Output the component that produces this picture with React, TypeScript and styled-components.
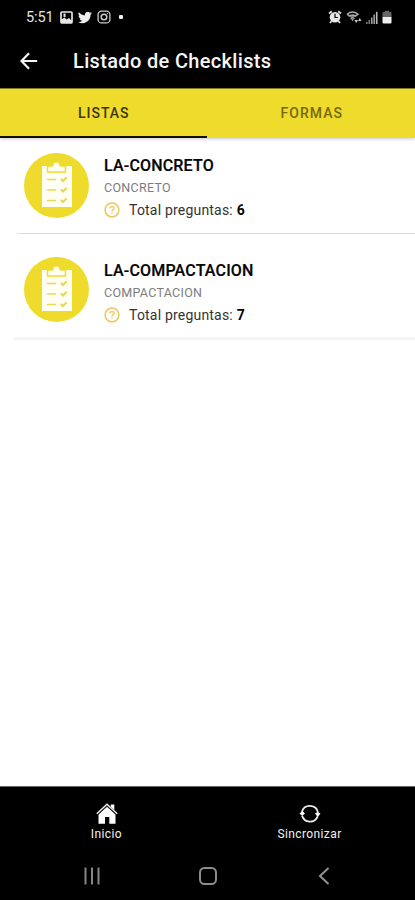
import React from "react";
import styled, { createGlobalStyle } from "styled-components";

const GlobalStyle = createGlobalStyle`
  * { box-sizing: border-box; }
  body { margin: 0; background: #fff; font-family: Roboto, "Liberation Sans", sans-serif; }
  svg { display: block; flex: none; }
`;

const Screen = styled.div`
  width: 100%;
  height: 900px;
  display: flex;
  flex-direction: column;
  background: #fff;
  overflow: hidden;
`;

const StatusBar = styled.div`
  height: 34px;
  padding: 0 23px 0 26px;
  display: flex;
  align-items: center;
  justify-content: space-between;
  background: #000;
  color: #e6e6e6;
`;

const StatusGroup = styled.div<{ $gap: number }>`
  display: flex;
  align-items: center;
  gap: ${(p) => p.$gap}px;
`;

const Clock = styled.span`
  width: 29px;
  padding-top: 1px;
  font-size: 14.5px;
  line-height: 18px;
  letter-spacing: -0.1px;
`;

const NoticeDot = styled.span`
  width: 4px;
  height: 4px;
  margin: 0 0 1px 3px;
  border-radius: 1px;
  background: #eee;
`;

const AppBar = styled.header`
  height: 54px;
  padding: 0 0 0 20px;
  display: flex;
  align-items: center;
  gap: 35px;
  background: #000;
  color: #f5f5f5;
`;

const AppTitle = styled.h1`
  margin: 0;
  font-size: 20px;
  line-height: 26px;
  font-weight: 500;
  letter-spacing: 0.34px;
  white-space: nowrap;
`;

const Tabs = styled.nav`
  height: 50px;
  display: flex;
  background: #efdb2b;
  border-top: 1px solid #85791f;
  box-shadow: 0 1px 3px rgba(60, 60, 90, 0.28);
`;

const Tab = styled.div<{ $active?: boolean }>`
  flex: ${(p) => (p.$active ? "0 0 206.5px" : "1")};
  display: flex;
  align-items: center;
  justify-content: center;
  padding: ${(p) => (p.$active ? "1px 0 0 1px" : "0 0 1px 2px")};
  border-bottom: ${(p) => (p.$active ? "2px solid #120f05" : "none")};
  color: ${(p) => (p.$active ? "#3d3508" : "#75690f")};
  font-size: 14px;
  font-weight: 500;
  letter-spacing: 1px;
`;

const List = styled.main`
  flex: 1;
  display: flex;
  flex-direction: column;
`;

const Item = styled.article<{ $last?: boolean }>`
  height: ${(p) => (p.$last ? 106 : 96)}px;
  margin-left: ${(p) => (p.$last ? 14 : 17)}px;
  padding: ${(p) => (p.$last ? "23px 0 0 10px" : "15px 0 0 7px")};
  display: flex;
  gap: 15px;
  border-bottom: ${(p) => (p.$last ? "3px solid #f4f4f5" : "1px solid #dcdcdc")};
`;

const Badge = styled.div`
  width: 65px;
  height: 65px;
  padding-bottom: 2px;
  border-radius: 50%;
  background: #efdb2b;
  display: flex;
  align-items: center;
  justify-content: center;
`;

const Details = styled.div<{ $last?: boolean }>`
  display: flex;
  flex-direction: column;
  padding-top: ${(p) => (p.$last ? 3 : 2)}px;
`;

const ItemTitle = styled.h2`
  margin: 0;
  font-size: 16px;
  line-height: 22px;
  font-weight: 500;
  letter-spacing: 0.18px;
  color: #050505;
  -webkit-text-stroke: 0.2px #050505;
`;

const ItemCategory = styled.div`
  font-size: 12.5px;
  line-height: 22px;
  letter-spacing: 0.28px;
  color: #7d7d7d;
`;

const QuestionCount = styled.div`
  display: flex;
  align-items: center;
  gap: 9px;
  line-height: 22px;
  font-size: 14px;
  letter-spacing: 0.2px;
  color: #333;
  white-space: nowrap;
`;

const Count = styled.strong`
  font-weight: 700;
  color: #050505;
`;

const BottomNav = styled.footer`
  height: 65px;
  padding-right: 9px;
  display: grid;
  grid-template-columns: 213px 1fr;
  background: #000;
  border-top: 1px solid #666;
`;

const NavItem = styled.div`
  display: flex;
  flex-direction: column;
  align-items: center;
  gap: 1px;
  padding-top: 16px;
  color: #f2f2f2;
`;

const NavLabel = styled.span`
  font-size: 12px;
  line-height: 16px;
  letter-spacing: 0.4px;
`;

const SystemNav = styled.div`
  height: 49px;
  padding: 0 85px 0 83px;
  display: grid;
  grid-template-columns: 116px 1fr auto;
  align-items: center;
  background: #000;
`;

const ClipboardIcon = () => (
  <svg width="32" height="46" viewBox="0 0 32 46">
    <path fill="#fffef2" d="M1 4H10Q11 3 12 2Q15 -1 19 2Q20 3 21 4H31V45H1Z" />
    <path fill="none" stroke="#efdb2b" strokeWidth="1.500" d="M6.500 4V10H24.500V4H20.500Q19 4 18.500 2M6.500 4H10.500Q12 4 12.500 2" />
    {[17.5, 28, 38.5].map((y) => (
      <g key={y} fill="none" stroke="#e6d75a" strokeLinecap="round">
        <path strokeWidth="1.500" d={`M6.5 ${y}H14.5`} />
        <path strokeWidth="2.200" d={`M20.5 ${y}L22 ${y + 1.5}L25 ${y - 1.5}`} />
      </g>
    ))}
  </svg>
);

const QuestionIcon = () => (
  <svg width="16" height="16" viewBox="0 0 16 16" fill="none" stroke="#f2c65a">
    <circle cx="8" cy="8" r="6.900" strokeWidth="1.500" />
    <path strokeWidth="1.300" d="M5.900 6.400Q6 4.600 8.100 4.600Q10.200 4.700 10.100 6.400Q10 7.400 8.800 7.900Q8 8.300 8 9.400M8 10.500V11.700" />
  </svg>
);

const BackIcon = () => (
  <svg width="18" height="18" viewBox="0 0 18 18" fill="none" stroke="#f5f5f5" strokeWidth="2.200">
    <path d="M17.200 9H1.800M9 1.200L1.500 9L9 16.800" />
  </svg>
);

const PictureIcon = () => (
  <svg width="13" height="13" viewBox="0 0 13 13">
    <rect x="1" y="1" width="11" height="11" rx="1" fill="none" stroke="#e6e6e6" strokeWidth="1.700" />
    <path fill="#e6e6e6" d="M1 12V8.800L4.500 6.500L6.500 8.500L9 7L12 10V12ZM3.500 2.500H5.500V6H3.500Z" />
  </svg>
);

const TwitterIcon = () => (
  <svg width="14" height="13" viewBox="0 2 24 20" fill="#eee">
    <path d="M24 4.600c-.9.400-1.800.700-2.800.800 1-.6 1.800-1.600 2.200-2.700-1 .6-2 1-3.100 1.200A4.900 4.900 0 0 0 11.900 8.400C7.800 8.200 4.100 6.200 1.700 3.200a4.900 4.900 0 0 0 1.500 6.600c-.8 0-1.600-.2-2.200-.6 0 2.300 1.600 4.400 3.900 4.900-.7.200-1.500.2-2.200.1.600 2 2.400 3.400 4.600 3.400A9.900 9.900 0 0 1 0 19.500 14 14 0 0 0 21.500 7.100c1-.7 1.800-1.600 2.500-2.500Z" />
  </svg>
);

const InstagramIcon = () => (
  <svg width="14" height="14" viewBox="0 0 14 14" fill="none" stroke="#ccc">
    <rect x="1.100" y="1.100" width="11.800" height="11.800" rx="3.500" strokeWidth="1.300" />
    <circle cx="7" cy="7" r="2.800" strokeWidth="1.500" />
    <circle cx="10.400" cy="3.600" r=".7" fill="#ccc" stroke="none" />
  </svg>
);

const AlarmIcon = () => (
  <svg width="14" height="14" viewBox="0 0 14 14">
    <path stroke="#ddd" strokeWidth="1.800" d="M1 3.500L3.800 1.200M13 3.500L10.200 1.200M3.500 11L2 13M10.500 11L12 13" />
    <circle cx="7" cy="7.300" r="5.300" fill="#e6e6e6" />
    <path fill="none" stroke="#000" strokeWidth="1.200" d="M7 3.800V7.500H9.800" />
  </svg>
);

const WifiIcon = () => (
  <svg width="16" height="14" viewBox="0 0 16 14" fill="none" stroke="#aaa">
    <path strokeWidth="1.400" d="M1 4.300Q6.500-.3 12 4.300Q6.500 8 1 4.300M2.700 6.500Q6.500 3.300 10.300 6.500M4.500 8.700Q6.500 7 8.500 8.700" />
    <path fill="#ccc" stroke="none" d="M5.200 9.200H7.800L6.500 11ZM8.500 10H12L10.200 13ZM12 11H15.500L13.800 8Z" />
  </svg>
);

const SignalIcon = () => (
  <svg width="12" height="13" viewBox="0 0 12 13">
    <path fill="#777" d="M0 11H1.600V13H0ZM2.500 9H4.100V13H2.500Z" />
    <path fill="#999" d="M5 6.500H6.600V13H5ZM7.400 3.500H9V13H7.400Z" />
    <path fill="#bbb" d="M9.900 .8H11.500V13H9.900Z" />
  </svg>
);

const BatteryIcon = () => (
  <svg width="10" height="14" viewBox="0 0 10 14">
    <path fill="#666" d="M3 .8H7V2H8.500Q9.500 2 9.500 3V7H.5V3Q.5 2 1.500 2H3Z" />
    <path fill="#eee" d="M.5 7H9.500V12.500Q9.500 13.500 8.500 13.500H1.500Q.5 13.500 .5 12.500Z" />
  </svg>
);

const HomeIcon = () => (
  <svg width="22" height="22" viewBox="0 0 22 22">
    <path fill="#fff" d="M2.500 11.500L11 3.800L19.500 11.500V20.800H13.300V14H9V20.800H2.500ZM14.800 1.500H18.300V7L14.800 3.800Z" />
    <path fill="none" stroke="#eee" strokeWidth="1.500" d="M.8 10.800L11 1.300L21.200 10.800" />
    <path fill="none" stroke="#333" strokeWidth=".7" d="M2 11.500L11 3.200L20 11.500" />
  </svg>
);

const SyncIcon = () => (
  <svg width="22" height="22" viewBox="0 0 22 22">
    <path fill="none" stroke="#eee" strokeWidth="1.800" d="M3 8.500A8.300 8.300 0 0 1 19 9.500M18.700 13.300A8.300 8.300 0 0 1 3 12.500" />
    <path fill="#fff" d="M.5 10.800L3.300 7.500L6 10.800L3.300 12.500ZM16 10.500L18.800 9L21.500 10.500L18.800 14Z" />
  </svg>
);

const RecentsIcon = () => (
  <svg width="18" height="18" viewBox="0 0 18 18" stroke="#858585" strokeWidth="2">
    <path d="M2.500 .5V17.500M9 .5V17.500M15.500 .5V17.500" />
  </svg>
);

const HomeButtonIcon = () => (
  <svg width="18" height="18" viewBox="0 0 18 18" fill="none" stroke="#8c8c8c" strokeWidth="2">
    <rect x="1" y="1" width="16" height="16" rx="4.500" />
  </svg>
);

const SystemBackIcon = () => (
  <svg width="12" height="18" viewBox="0 0 12 18" fill="none" stroke="#929292" strokeWidth="2">
    <path d="M10.500 1L2 9L10.500 17" />
  </svg>
);

const checklists = [
  { title: "LA-CONCRETO", category: "CONCRETO", total: 6 },
  { title: "LA-COMPACTACION", category: "COMPACTACION", total: 7 },
];

export default function App() {
  return (
    <Screen>
      <GlobalStyle />
      <StatusBar>
        <StatusGroup $gap={5}>
          <Clock>5:51</Clock>
          <PictureIcon />
          <TwitterIcon />
          <InstagramIcon />
          <NoticeDot />
        </StatusGroup>
        <StatusGroup $gap={4}>
          <AlarmIcon />
          <WifiIcon />
          <SignalIcon />
          <BatteryIcon />
        </StatusGroup>
      </StatusBar>
      <AppBar>
        <BackIcon />
        <AppTitle>Listado de Checklists</AppTitle>
      </AppBar>
      <Tabs>
        <Tab $active>LISTAS</Tab>
        <Tab>FORMAS</Tab>
      </Tabs>
      <List>
        {checklists.map((c, i) => (
          <Item key={c.title} $last={i === checklists.length - 1}>
            <Badge>
              <ClipboardIcon />
            </Badge>
            <Details $last={i === checklists.length - 1}>
              <ItemTitle>{c.title}</ItemTitle>
              <ItemCategory>{c.category}</ItemCategory>
              <QuestionCount>
                <QuestionIcon />
                <span>
                  Total preguntas: <Count>{c.total}</Count>
                </span>
              </QuestionCount>
            </Details>
          </Item>
        ))}
      </List>
      <BottomNav>
        <NavItem>
          <HomeIcon />
          <NavLabel>Inicio</NavLabel>
        </NavItem>
        <NavItem>
          <SyncIcon />
          <NavLabel>Sincronizar</NavLabel>
        </NavItem>
      </BottomNav>
      <SystemNav>
        <RecentsIcon />
        <HomeButtonIcon />
        <SystemBackIcon />
      </SystemNav>
    </Screen>
  );
}
